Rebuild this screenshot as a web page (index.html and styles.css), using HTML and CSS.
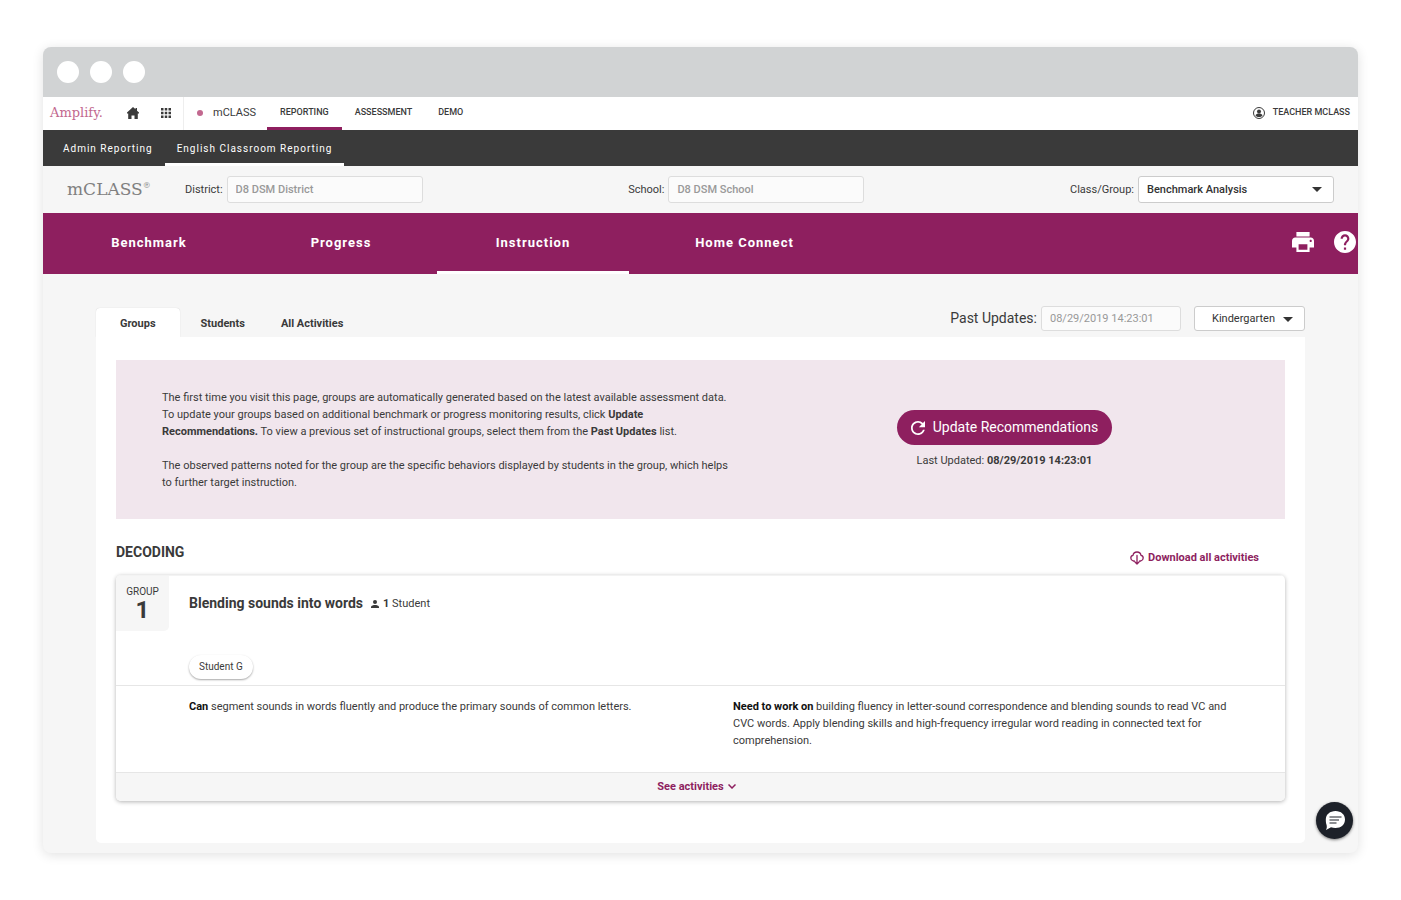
FILE: index.html
```html
<!DOCTYPE html>
<html lang="en">
<head>
    <meta charset="UTF-8">
    <meta name="viewport" content="width=device-width, initial-scale=1.0">
    <title>mCLASS - Instruction</title>
    <link rel="stylesheet" href="styles.css">
</head>
<body>
    <div class="window">
        <div class="titlebar">
            <span class="dot"></span>
            <span class="dot"></span>
            <span class="dot"></span>
        </div>

        <!-- Top navigation -->
        <header class="topbar">
            <a href="#" class="brand">Amplify.</a>
            <a href="#" class="icon-link" aria-label="Home">
                <svg width="12" height="12" viewBox="0 0 12 12"><path fill="currentColor" d="M6 0l2.500 2.300V1H10v2.700L12 5.600V6.500h-1.200V12H7.500V8.500H4.500V12H1.200V6.500H0v-.9z"/></svg>
            </a>
            <a href="#" class="icon-link apps" aria-label="Apps">
                <svg width="10" height="10" viewBox="0 0 10 10"><path fill="currentColor" d="M0 0h2.500v2.500H0zM3.750 0h2.500v2.500h-2.500zM7.500 0H10v2.500H7.500zM0 3.750h2.500v2.500H0zM3.750 3.750h2.500v2.500h-2.500zM7.500 3.750H10v2.500H7.500zM0 7.500h2.500V10H0zM3.750 7.500h2.500V10h-2.500zM7.500 7.500H10V10H7.500z"/></svg>
            </a>
            <a href="#" class="product">mCLASS</a>
            <nav class="topnav">
                <a href="#" class="active">REPORTING</a>
                <a href="#">ASSESSMENT</a>
                <a href="#">DEMO</a>
            </nav>
            <a href="#" class="user">
                <svg width="12" height="12" viewBox="0 0 24 24"><circle cx="12" cy="12" r="11" fill="none" stroke="currentColor" stroke-width="2"/><circle cx="12" cy="9" r="4" fill="currentColor"/><path fill="currentColor" d="M5 17c1-3 4-4 7-4s6 1 7 4c-2 2-4 3-7 3s-5-1-7-3z"/></svg>
                TEACHER MCLASS
            </a>
        </header>

        <nav class="subnav">
            <a href="#">Admin Reporting</a>
            <a href="#" class="active">English Classroom Reporting</a>
        </nav>

        <!-- Filters -->
        <div class="filters">
            <div class="logo">mCLASS<sup>®</sup></div>
            <div class="filter-list">
                <div class="filter">
                    <label for="district">District:</label>
                    <input type="text" id="district" value="D8 DSM District" disabled>
                </div>
                <div class="filter">
                    <label for="school">School:</label>
                    <input type="text" id="school" value="D8 DSM School" disabled>
                </div>
                <div class="filter">
                    <label for="group">Class/Group:</label>
                    <div class="select">
                        <select id="group">
                            <option>Benchmark Analysis</option>
                        </select>
                    </div>
                </div>
            </div>
        </div>

        <!-- Main navigation -->
        <div class="mainbar">
            <nav class="mainnav">
                <a href="#">Benchmark</a>
                <a href="#">Progress</a>
                <a href="#" class="active">Instruction</a>
                <a href="#">Home Connect</a>
            </nav>
            <button class="icon-button" aria-label="Print">
                <svg width="22" height="20" viewBox="2 3 20 18"><path fill="currentColor" d="M19 8H5c-1.700 0-3 1.300-3 3v6h4v4h12v-4h4v-6c0-1.700-1.300-3-3-3zm-3 11H8v-5h8v5zm3-7c-.6 0-1-.4-1-1s.4-1 1-1 1 .4 1 1-.4 1-1 1zM18 3H6v4h12z"/></svg>
            </button>
            <button class="icon-button" aria-label="Help">
                <svg width="22" height="22" viewBox="2 2 20 20"><path fill="currentColor" d="M12 2C6.480 2 2 6.480 2 12s4.480 10 10 10 10-4.480 10-10S17.520 2 12 2zm1 17h-2v-2h2v2zm2.070-7.750l-.9.920C13.450 12.900 13 13.500 13 15h-2v-.5c0-1.100.450-2.100 1.170-2.830l1.240-1.260c.370-.360.590-.860.590-1.410 0-1.100-.9-2-2-2s-2 .9-2 2H8c0-2.210 1.790-4 4-4s4 1.790 4 4c0 .880-.360 1.680-.930 2.250z"/></svg>
            </button>
        </div>

        <main class="content">
            <div class="toolbar">
                <nav class="tabs">
                    <a href="#" class="active">Groups</a>
                    <a href="#">Students</a>
                    <a href="#">All Activities</a>
                </nav>
                <div class="updates">
                    <label for="updates">Past Updates:</label>
                    <input type="text" id="updates" value="08/29/2019 14:23:01" disabled>
                    <div class="select grade">
                        <select aria-label="Grade">
                            <option>Kindergarten</option>
                        </select>
                    </div>
                </div>
            </div>

            <div class="panel">
                <section class="banner">
                    <div class="banner-text">
                        <p>The first time you visit this page, groups are automatically generated based on the latest available assessment data.<br>To update your groups based on additional benchmark or progress monitoring results, click <b>Update<br>Recommendations.</b> To view a previous set of instructional groups, select them from the <b>Past Updates</b> list.</p>
                        <p>The observed patterns noted for the group are the specific behaviors displayed by students in the group, which helps<br>to further target instruction.</p>
                    </div>
                    <div class="banner-action">
                        <button class="update-button">
                            <svg width="14" height="14" viewBox="4 4 16 16"><path fill="currentColor" d="M17.650 6.350C16.200 4.900 14.210 4 12 4c-4.420 0-7.990 3.580-7.990 8s3.570 8 7.990 8c3.730 0 6.840-2.550 7.730-6h-2.080c-.820 2.330-3.040 4-5.650 4-3.310 0-6-2.690-6-6s2.690-6 6-6c1.660 0 3.140.690 4.220 1.780L13 11h7V4l-2.350 2.350z"/></svg>
                            Update Recommendations
                        </button>
                        <span>Last Updated: <b>08/29/2019 14:23:01</b></span>
                    </div>
                </section>

                <div class="section-head">
                    <h2>DECODING</h2>
                    <a href="#" class="download">
                        <svg width="14" height="14" viewBox="0 0 14 14" fill="none" stroke="currentColor" stroke-width="1.300" stroke-linecap="round" stroke-linejoin="round"><path d="M4.300 10H3.200C1.700 9.500.8 8.300.8 7S1.700 4.500 3 4.300C3.300 2.300 5 1 7 1s3.700 1.300 4 3.300c1.300.2 2.200 1.400 2.200 2.700s-.9 2.500-2.400 3H9.700M7 4.500V13M5 11l2 2 2-2"/></svg>
                        Download all activities
                    </a>
                </div>

                <article class="card">
                    <div class="card-top">
                        <div class="badge">
                            <span>GROUP</span>
                            <strong>1</strong>
                        </div>
                        <div class="card-info">
                            <div class="card-title">
                                <h3>Blending sounds into words</h3>
                                <svg width="8" height="8" viewBox="4 4 16 16"><circle cx="12" cy="8" r="4" fill="currentColor"/><path fill="currentColor" d="M12 14c-2.700 0-8 1.300-8 4v2h16v-2c0-2.700-5.300-4-8-4z"/></svg>
                                <span><b>1</b> Student</span>
                            </div>
                            <button class="chip">Student G</button>
                        </div>
                    </div>
                    <div class="card-body">
                        <p><b>Can</b> segment sounds in words fluently and produce the primary sounds of common letters.</p>
                        <p><b>Need to work on</b> building fluency in letter-sound correspondence and blending sounds to read VC and<br>CVC words. Apply blending skills and high-frequency irregular word reading in connected text for<br>comprehension.</p>
                    </div>
                    <button class="card-footer">
                        See activities
                        <svg width="8" height="5" viewBox="0 0 8 5"><path fill="none" stroke="currentColor" stroke-width="1.500" d="M.5.5L4 4 7.500.5"/></svg>
                    </button>
                </article>
            </div>
        </main>

        <button class="chat" aria-label="Chat">
            <svg width="20" height="20" viewBox="0 0 20 20"><path fill="#fff" d="M10.500 1C16 1 20 4.500 20 9.500S16 18 10.500 18c-1.700 0-3.200-.2-4.500-.8L1 20c.8-1.500 1-3 .6-5C1 13.500.8 11.500.8 9.500.8 4.500 5 1 10.500 1z"/><path stroke="#1d2129" stroke-width="1.200" d="M4.500 7h12M4.500 10h9.500M4.500 13h7"/></svg>
        </button>
    </div>
</body>
</html>
```

FILE: styles.css
```css
* {
    box-sizing: border-box;
}
body {
    margin: 0;
    padding: 47px 43px;
    background: #fff;
    color: #3a3a3a;
    font-family: Roboto, "Liberation Sans", sans-serif;
    font-size: 11px;
    line-height: 17px;
}
a {
    color: inherit;
    text-decoration: none;
}
p, h2, h3 {
    margin: 0;
}
button, input, select {
    font: inherit;
    color: inherit;
}
button {
    border: none;
    background: none;
    padding: 0;
    cursor: pointer;
}
svg {
    display: block;
    flex-shrink: 0;
}
.window {
    position: relative;
    background: #f6f6f6;
    border-radius: 8px;
    overflow: hidden;
    box-shadow: 0 2px 12px rgba(0, 0, 0, 0.12);
}
.titlebar {
    display: flex;
    align-items: center;
    gap: 11px;
    height: 50px;
    padding: 0 14px;
    background: #d1d3d4;
}
.dot {
    width: 22px;
    height: 22px;
    border-radius: 50%;
    background: #fff;
}

/* Top navigation */
.topbar {
    display: flex;
    align-items: center;
    height: 33px;
    padding: 0 8px 2px 7px;
    background: #fff;
}
.brand {
    width: 77px;
    font-family: "DejaVu Serif", "Liberation Serif", serif;
    font-size: 13px;
    color: #c2688f;
}
.icon-link {
    width: 34px;
}
.apps {
    width: 22px;
}
.product {
    display: flex;
    align-items: center;
    align-self: stretch;
    gap: 10px;
    margin-bottom: -2px;
    padding: 0 11px 2px 13px;
    border-left: 1px solid #eee;
}
.product::before {
    content: "";
    width: 6px;
    height: 6px;
    border-radius: 50%;
    background: #c2688f;
}
.topnav {
    display: flex;
    align-self: stretch;
    flex: 1;
    margin-bottom: -2px;
    font-size: 9px;
    font-weight: 500;
}
.topnav a {
    display: flex;
    align-items: center;
    padding: 0 13px;
    border-bottom: 3px solid transparent;
}
.topnav .active {
    border-bottom-color: #8e1f5f;
}
.user {
    display: flex;
    align-items: center;
    gap: 8px;
    font-size: 9px;
    font-weight: 500;
}
.subnav {
    display: flex;
    height: 36px;
    padding: 0 8px;
    background: #3a3a3a;
    color: #fff;
    font-size: 10px;
    letter-spacing: 1px;
}
.subnav a {
    display: flex;
    align-items: center;
    padding: 0 12px;
    border-top: 3px solid transparent;
    border-bottom: 3px solid transparent;
}
.subnav .active {
    border-bottom-color: #fff;
}

/* Filters */
.filters {
    display: flex;
    align-items: center;
    height: 47px;
    padding: 0 24px;
}
.logo {
    width: 118px;
    font-family: "DejaVu Serif", "Liberation Serif", serif;
    font-size: 17px;
    color: #808080;
}
.logo sup {
    font-size: 8px;
    line-height: 1;
}
.filter-list {
    display: flex;
    justify-content: space-between;
    flex: 1;
}
.filter {
    display: flex;
    align-items: center;
    gap: 4px;
}
input, select {
    width: 196px;
    height: 27px;
    padding: 0 8px;
    border: 1px solid #ddd;
    border-radius: 3px;
    background: #fbfbfb;
    color: #999;
    font-weight: 500;
}
select {
    appearance: none;
    border-color: #ccc;
    background: #fff;
    color: #333;
}
.select {
    position: relative;
}
.select::after {
    content: "";
    position: absolute;
    top: 11px;
    right: 12px;
    border: 5px solid transparent;
    border-top-color: #333;
    border-bottom: none;
    pointer-events: none;
}

/* Main navigation */
.mainbar {
    display: flex;
    align-items: center;
    gap: 20px;
    height: 61px;
    padding: 0 2px 0 10px;
    background: #8e1f5f;
    color: #fff;
}
.mainnav {
    display: grid;
    grid-template-columns: repeat(3, 192px) 231px;
    flex: 1;
    align-self: stretch;
    font-size: 13px;
    font-weight: 700;
    letter-spacing: 1px;
}
.mainnav a {
    display: flex;
    align-items: center;
    justify-content: center;
    border-bottom: 3px solid transparent;
}
.mainnav .active {
    border-bottom-color: #fff;
}
.icon-button {
    padding-bottom: 3px;
}

.content {
    padding: 32px 53px 10px;
}
.toolbar {
    display: flex;
    justify-content: space-between;
    height: 31px;
}
.tabs {
    display: flex;
    align-items: flex-end;
    font-weight: 700;
}
.tabs a {
    padding: 7px 18px 5px;
    border-radius: 4px 4px 0 0;
}
.tabs .active {
    margin-right: 3px;
    padding: 7px 24px 5px;
    background: #fff;
    box-shadow: 0 0 1px rgba(0, 0, 0, 0.2);
}
.updates {
    display: flex;
    align-items: center;
    height: 25px;
}
.updates label {
    margin-right: 4px;
    font-size: 14px;
}
.updates input {
    width: 140px;
    height: 25px;
    margin-right: 13px;
    font-weight: 400;
}
.grade select {
    width: 111px;
    height: 25px;
    padding: 0 17px;
    font-weight: 400;
}

.panel {
    position: relative;
    padding: 23px 20px 42px;
    background: #fff;
    border-radius: 0 0 5px 5px;
}
.banner {
    display: grid;
    grid-template-columns: 52% 48%;
    align-items: center;
    height: 159px;
    background: #f1e6ed;
}
.banner-text {
    padding-left: 46px;
    white-space: nowrap;
}
.banner-text p + p {
    margin-top: 17px;
}
.banner-action {
    display: flex;
    flex-direction: column;
    align-items: center;
    gap: 7px;
}
.update-button {
    display: flex;
    align-items: center;
    gap: 8px;
    height: 35px;
    padding: 0 14px;
    border-radius: 18px;
    background: #8e1f5f;
    color: #fff;
    font-size: 14px;
}

.section-head {
    display: flex;
    justify-content: space-between;
    padding: 25px 26px 0 0;
    height: 56px;
}
h2 {
    font-size: 14px;
}
.download {
    display: flex;
    align-items: center;
    align-self: flex-start;
    gap: 4px;
    margin-top: 5px;
    color: #8e1f5f;
    font-weight: 700;
}

/* Group card */
.card {
    border-radius: 5px;
    overflow: hidden;
    box-shadow: 0 1px 4px rgba(0, 0, 0, 0.3);
}
.card-top {
    display: flex;
    align-items: flex-start;
    gap: 20px;
    height: 111px;
    border-top: 1px solid #f3f3f3;
    border-bottom: 1px solid #e6e6e6;
}
.badge {
    display: flex;
    flex-direction: column;
    align-items: center;
    width: 53px;
    height: 55px;
    padding-top: 7px;
    border-radius: 0 0 5px 0;
    background: #f6f6f6;
    font-size: 10px;
}
.badge strong {
    font-size: 24px;
    line-height: 20px;
}
.card-info {
    display: flex;
    flex-direction: column;
    align-items: flex-start;
    justify-content: space-between;
    height: 103px;
    padding-top: 19px;
}
.card-title {
    display: flex;
    align-items: center;
}
.card-title svg {
    margin: 0 4px 0 8px;
}
h3 {
    font-size: 14px;
}
.chip {
    height: 24px;
    padding: 0 10px 2px;
    border-radius: 12px;
    background: #fff;
    box-shadow: 0 1px 2px rgba(0, 0, 0, 0.35);
    font-size: 10px;
}
.card-body {
    display: grid;
    grid-template-columns: 1fr 1fr;
    height: 86px;
    padding: 12px 8px 0 73px;
    white-space: nowrap;
}
.card-body b {
    color: #111;
}
.card-footer {
    display: flex;
    align-items: center;
    justify-content: center;
    gap: 4px;
    width: 100%;
    height: 29px;
    padding: 0 8px 2px 0;
    border-top: 1px solid #e6e6e6;
    background: #f6f6f6;
    color: #8e1f5f;
    font-weight: 700;
}

.chat {
    position: absolute;
    right: 5px;
    bottom: 14px;
    display: flex;
    align-items: center;
    justify-content: center;
    width: 37px;
    height: 37px;
    padding-bottom: 2px;
    border-radius: 50%;
    background: #1d2129;
    box-shadow: 0 1px 3px rgba(0, 0, 0, 0.5);
}
```
